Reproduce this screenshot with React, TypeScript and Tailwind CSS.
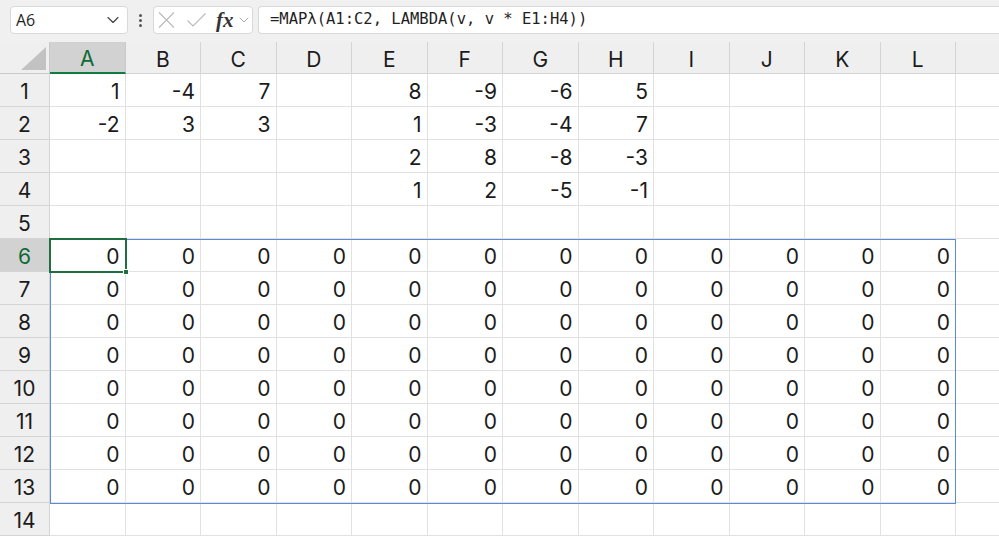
import { ChevronDown } from "lucide-react";

const cols = ["A", "B", "C", "D", "E", "F", "G", "H", "I", "J", "K", "L"];

const data: Record<number, (string | number)[]> = {
    1: [1, -4, 7, "", 8, -9, -6, 5],
    2: [-2, 3, 3, "", 1, -3, -4, 7],
    3: ["", "", "", "", 2, 8, -8, -3],
    4: ["", "", "", "", 1, 2, -5, -1],
};

function cellValue(row: number, col: number) {
    if (row >= 6 && row <= 13) return 0;
    const r = data[row];
    if (!r) return "";
    return r[col] ?? "";
}

export default function App() {
    const rows = Array.from({ length: 14 }, (_, i) => i + 1);

    return (
        <div className="w-[999px] h-[537px] overflow-hidden bg-white font-['Inter',sans-serif] text-[#1b1b1b]">
            {/* Formula bar */}
            <div className="flex h-[42px] items-start bg-[#f0f0f0] pl-[10px] pt-[6px]">
                <div className="flex h-[28px] w-[118px] items-center justify-between rounded-[4px] border border-[#d9d9d9] bg-white pl-[5px] pr-[4px]">
                    <span className="font-['Open_Sans',sans-serif] text-[16px] text-[#1f1f1f]">A6</span>
                    <ChevronDown className="h-[20px] w-[20px] text-[#444]" strokeWidth={1.4} />
                </div>
                <div className="flex h-[28px] w-[25px] flex-col items-center justify-center gap-[2px]">
                    <span className="h-[3px] w-[3px] rounded-full bg-[#555]" />
                    <span className="h-[3px] w-[3px] rounded-full bg-[#555]" />
                    <span className="h-[3px] w-[3px] rounded-full bg-[#555]" />
                </div>
                <div className="flex h-[28px] w-[100px] items-center rounded-[4px] border border-[#d9d9d9] bg-white pl-[4px]">
                    <svg width="17" height="16" viewBox="0 0 17 16" fill="none" stroke="#bcbcbc" strokeWidth="1.2">
                        <path d="M1 0.5 16 15.5M16 0.5 1 15.5" />
                    </svg>
                    <svg className="ml-[12px]" width="19" height="14" viewBox="0 0 19 14" fill="none" stroke="#bcbcbc" strokeWidth="1.2">
                        <path d="M0.5 7.5 6 13 18.5 0.5" />
                    </svg>
                    <span className="ml-[10px] font-['Liberation_Serif',serif] text-[21px] font-bold italic leading-none text-[#333]">fx</span>
                    <ChevronDown className="ml-[2px] h-[16px] w-[16px] text-[#999]" strokeWidth={1.3} />
                </div>
                <div className="ml-[5px] flex h-[28px] flex-1 items-center rounded-l-[4px] border border-r-0 border-[#d9d9d9] bg-white pl-[11px]">
                    <span className="font-['DejaVu_Sans_Mono',monospace] text-[15.5px] text-[#1f1f1f]">
                        =MAPλ(A1:C2, LAMBDA(v, v * E1:H4))
                    </span>
                </div>
            </div>

            {/* Sheet */}
            <div className="relative">
                <div className="grid grid-cols-[50px_repeat(12,75.5px)_1fr] grid-rows-[32px_repeat(14,33px)]">
                    {/* corner */}
                    <div className="relative border-r border-b border-[#c8c8c8] bg-[#efefef]">
                        <svg className="absolute right-[3px] bottom-[3px]" width="25" height="23" viewBox="0 0 25 23">
                            <polygon points="25,0 25,23 0,23" fill="#c2c2c2" />
                        </svg>
                    </div>
                    {cols.map((c) => (
                        <div
                            key={c}
                            className={`flex items-center justify-center border-r pt-[4px] text-[21px] ${c === "A"
                                ? "border-b-2 border-r-[#c8c8c8] border-b-[#107c41] bg-[#d2d2d2] text-[#0e6a35]"
                                : "border-b border-[#d4d4d4] bg-[#efefef] text-[#1b1b1b]"
                                }`}
                        >
                            {c}
                        </div>
                    ))}
                    <div className="border-b border-[#d4d4d4] bg-[#efefef]" />

                    {rows.map((r) => (
                        <>
                            <div
                                key={`h${r}`}
                                className={`flex items-center justify-center border-r border-b border-[#d4d4d4] pt-[4px] text-[21px] ${r === 6 ? "bg-[#d2d2d2] text-[#0e6a35]" : "bg-[#efefef] text-[#1b1b1b]"
                                    }`}
                            >
                                {r}
                            </div>
                            {cols.map((c, ci) => (
                                <div
                                    key={`${c}${r}`}
                                    className="flex items-center justify-end border-r border-b border-[#e1e1e1] pr-[5px] pt-[4px] text-[21px]"
                                >
                                    {cellValue(r, ci)}
                                </div>
                            ))}
                            <div key={`x${r}`} className="border-b border-[#e1e1e1]" />
                        </>
                    ))}
                </div>

                {/* spill range */}
                <div className="pointer-events-none absolute left-[50px] top-[197px] z-10 h-[265px] w-[906px] border border-[#5b8ad6]" />

                {/* active cell */}
                <div className="pointer-events-none absolute left-[49px] top-[196px] z-20 h-[35px] w-[78px] border-2 border-[#1e6e3f]">
                    <div className="absolute -right-[4px] -bottom-[4px] h-[6px] w-[6px] border border-white bg-[#1e6e3f]" />
                </div>
            </div>
        </div>
    );
}
